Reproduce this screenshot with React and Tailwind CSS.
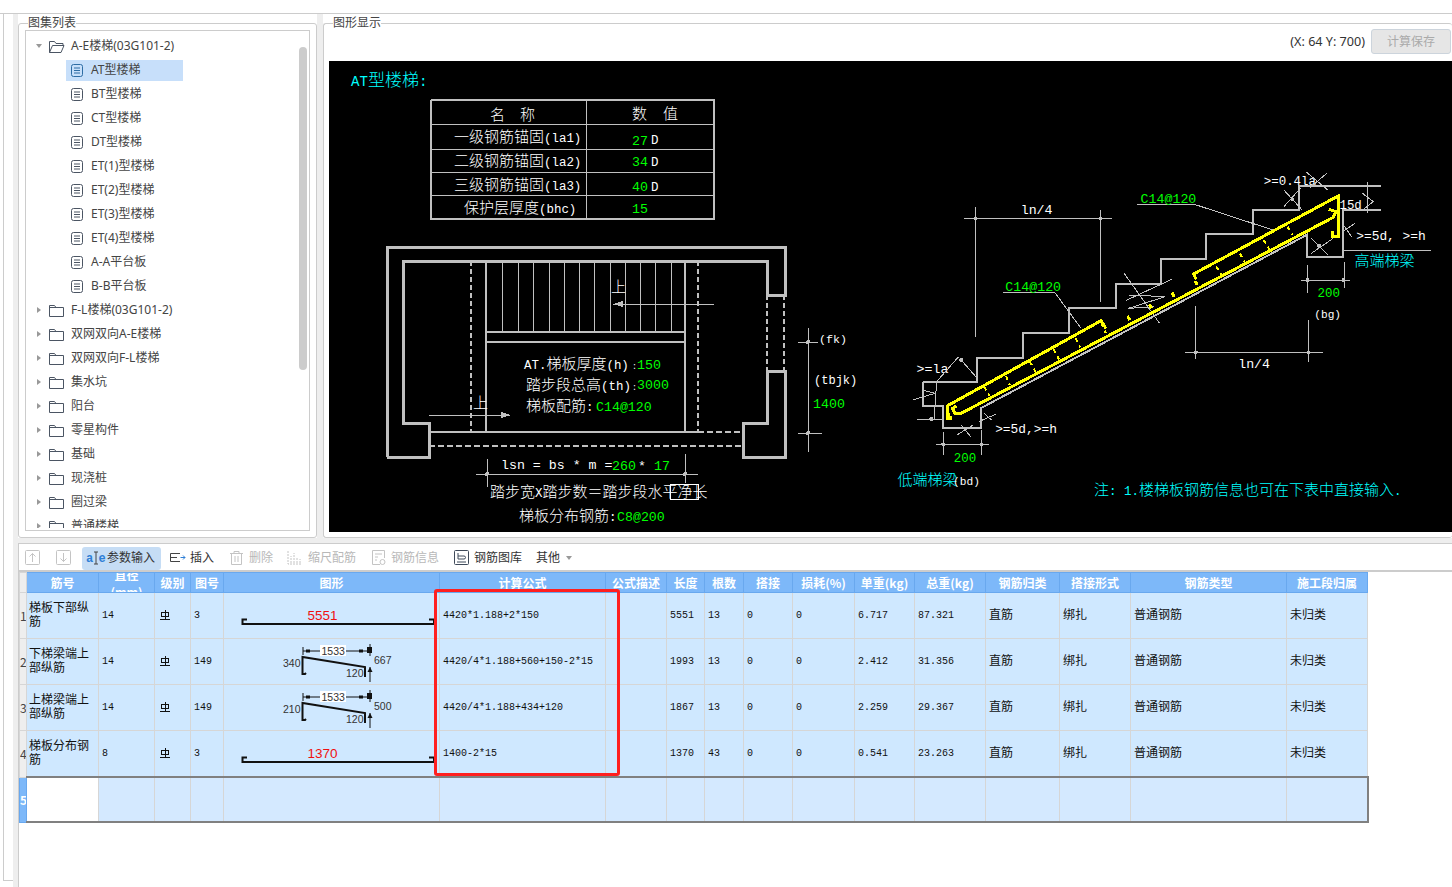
import React from "react";

const CJK = '"Noto Sans CJK SC", sans-serif';
const MONO = '"Liberation Mono", monospace';

/* ---------- CAD text: CJK glyphs are full-width, the rest half-width ---------- */
function T({ x, y, s = 15, c = "#fff", children }) {
  const runs = String(children).match(/[\u0000-\u00ff]+|[^\u0000-\u00ff]+/g) || [];
  return (
    <text x={x} y={y} fill={c} style={{ whiteSpace: "pre" }}>
      {runs.map((r, i) =>
        /^[\u0000-\u00ff]/.test(r) ? (
          <tspan key={i} fontFamily={MONO} fontSize={s * 0.83}>{r}</tspan>
        ) : (
          <tspan key={i} fontFamily={CJK} fontSize={s} fontWeight="300">{r}</tspan>
        )
      )}
    </text>
  );
}

function L({ p, c = "#c0c0c0", w = 1, dash }) {
  return (
    <polyline
      points={p.map((q) => q.join(",")).join(" ")}
      fill="none"
      stroke={c}
      strokeWidth={w}
      strokeDasharray={dash}
    />
  );
}

const G = "#00ff00";
const CY = "#00ffff";
const Y = "#ffff00";
const W = "#c0c0c0";

/* right-hand drawing was measured on a crop: convert crop coordinates to page */
const Z = (pts) => pts.map(([x, y]) => [880 + x / 2.736, 160 + y / 3]);
const ZL = ({ p, ...r }) => <L p={Z(p)} {...r} />;
const zx = (x) => 880 + x / 2.736;
const zy = (y) => 160 + y / 3;

function Dot({ x, y, r = 2 }) {
  return <circle cx={x} cy={y} r={r} fill="#c0c0c0" />;
}

function Cad() {
  const steps = [502, 518, 533, 549, 564, 579, 594, 610, 625, 640, 655, 671];
  const ties = [
    [[285, 680], [300, 708]],
    [[345, 648], [355, 675]],
    [[410, 605], [425, 635]],
    [[475, 568], [490, 598]],
    [[535, 535], [548, 562]],
    [[605, 490], [618, 520]],
    [[920, 320], [935, 345]],
    [[985, 280], [998, 308]],
    [[1050, 240], [1065, 268]],
    [[1115, 200], [1128, 225]],
  ];
  const bumps = [[680, 480], [740, 445], [802, 410], [865, 375]];
  return (
    <svg viewBox="329 61 1123 471" className="block w-full h-full" shapeRendering="crispEdges">
      <T x={351} y={86} s={17} c={CY}>AT型楼梯:</T>

      {/* value table */}
      <L p={[[431, 100], [714, 100], [714, 219], [431, 219], [431, 100]]} w={2} />
      <L p={[[586, 100], [586, 219]]} />
      <L p={[[431, 124], [714, 124]]} />
      <L p={[[431, 149], [714, 149]]} />
      <L p={[[431, 172], [714, 172]]} />
      <L p={[[431, 195], [714, 195]]} />
      <T x={490} y={120}>名</T>
      <T x={520} y={120}>称</T>
      <T x={632} y={119}>数</T>
      <T x={663} y={119}>值</T>
      <T x={454} y={142}>一级钢筋锚固(la1)</T>
      <T x={454} y={166}>二级钢筋锚固(la2)</T>
      <T x={454} y={190}>三级钢筋锚固(la3)</T>
      <T x={464} y={213}>保护层厚度(bhc)</T>
      <T x={632} y={145} s={16} c={G}>27</T>
      <T x={651} y={144}>D</T>
      <T x={632} y={166} s={16} c={G}>34</T>
      <T x={651} y={166}>D</T>
      <T x={632} y={191} s={16} c={G}>40</T>
      <T x={651} y={191}>D</T>
      <T x={632} y={213} s={16} c={G}>15</T>

      {/* plan */}
      <L w={3} p={[[387, 457], [387, 247], [785, 247], [785, 295], [767, 295], [767, 261], [403, 261], [403, 423], [429, 423], [429, 457], [387, 457]]} />
      <L w={3} p={[[767, 371], [785, 371], [785, 457], [743, 457], [743, 423], [767, 423], [767, 371]]} />
      <L w={2} dash="5 3" p={[[767, 295], [767, 371]]} />
      <L w={2} dash="5 3" p={[[784, 295], [784, 371]]} />
      <L w={2} p={[[429, 432], [698, 432]]} />
      <L w={2} dash="6 3" p={[[698, 432], [743, 432]]} />
      <L w={2} dash="6 3" p={[[429, 446], [743, 446]]} />
      <L w={2} dash="5 3" p={[[471, 261], [471, 432]]} />
      <L w={2} p={[[486, 261], [486, 432]]} />
      <L w={2} p={[[685, 261], [685, 432]]} />
      <L w={2} dash="5 3" p={[[698, 261], [698, 432]]} />
      {steps.map((x) => <L key={x} p={[[x, 261], [x, 332]]} />)}
      <L w={2} p={[[486, 332], [685, 332]]} />
      <L w={2} p={[[486, 342], [685, 342]]} />
      <T x={611} y={292}>上</T>
      <L p={[[613, 304], [714, 304]]} />
      <polygon points="613,304 623,301 623,307" fill={W} />
      <T x={473} y={408}>上</T>
      <L p={[[429, 415], [510, 415]]} />
      <polygon points="510,415 501,412 501,418" fill={W} />
      <T x={524} y={369}>AT.梯板厚度(h)</T>
      <T x={632} y={369} s={10}>:</T>
      <T x={637} y={369} s={16} c={G}>150</T>
      <T x={526} y={390}>踏步段总高(th)</T>
      <T x={632} y={390} s={10}>:</T>
      <T x={637} y={389} s={16} c={G}>3000</T>
      <T x={526} y={411}>梯板配筋:</T>
      <T x={596} y={411} s={16} c={G}>C14@120</T>

      {/* plan dimensions */}
      <L p={[[487, 459], [487, 487]]} />
      <L p={[[685, 454], [685, 483]]} />
      <L p={[[476, 474], [698, 474]]} />
      <Dot x={487} y={474} />
      <Dot x={685} y={474} />
      <T x={501} y={469} s={16}>lsn = bs * m =</T>
      <T x={612} y={470} s={16} c={G}>260</T>
      <T x={638} y={470} s={16}>*</T>
      <T x={654} y={470} s={16} c={G}>17</T>
      <T x={490} y={497}>踏步宽X踏步数＝踏步段水平净长</T>
      <rect x={670} y={484} width={28} height={15} fill="none" stroke="#fff" />
      <T x={519} y={521}>梯板分布钢筋:</T>
      <T x={617} y={521} s={16} c={G}>C8@200</T>
      <L p={[[808, 328], [808, 452]]} />
      <L p={[[798, 342], [818, 342]]} />
      <L p={[[798, 433], [822, 433]]} />
      <Dot x={808} y={342} />
      <Dot x={808} y={433} />
      <T x={819} y={343} s={14}>(fk)</T>
      <T x={814} y={384} s={14.5}>(tbjk)</T>
      <T x={813} y={408} s={16} c={G}>1400</T>

      {/* stair section: concrete */}
      <ZL w={2} p={[[117, 665], [265, 665], [265, 595], [392, 595], [392, 518], [516, 518], [516, 443], [645, 443], [645, 372], [770, 372], [770, 297], [893, 297], [893, 222], [1020, 222], [1020, 150], [1146, 150], [1146, 78], [1370, 78]]} />
      <ZL w={2} p={[[117, 665], [117, 737], [173, 737], [173, 805], [275, 805], [275, 745], [1167, 225], [1167, 290], [1268, 290], [1268, 150], [1370, 150]]} />

      {/* section dimensions */}
      <ZL p={[[230, 175], [635, 175]]} />
      <ZL p={[[262, 140], [262, 532]]} />
      <ZL p={[[604, 150], [604, 425]]} />
      <Dot x={zx(262)} y={zy(175)} />
      <Dot x={zx(604)} y={zy(175)} />
      <T x={zx(385)} y={zy(163)} s={16}>ln/4</T>
      <ZL p={[[835, 577], [1212, 577]]} />
      <ZL p={[[864, 437], [864, 597]]} />
      <ZL p={[[1173, 480], [1173, 605]]} />
      <Dot x={zx(864)} y={zy(577)} />
      <Dot x={zx(1173)} y={zy(577)} />
      <T x={zx(980)} y={zy(625)} s={16}>ln/4</T>
      <ZL p={[[702, 133], [860, 133], [1075, 210]]} />
      <T x={zx(713)} y={zy(128)} s={16} c={G}>C14@120</T>
      <ZL p={[[337, 397], [478, 397], [550, 505]]} />
      <T x={zx(343)} y={zy(392)} s={16} c={G}>C14@120</T>
      <T x={zx(1050)} y={zy(75)} s={15}>&gt;=0.4la</T>
      <ZL p={[[1105, 90], [1155, 150]]} />
      <ZL p={[[1105, 140], [1150, 85]]} />
      <Dot x={zx(1128)} y={zy(118)} />
      <ZL p={[[1165, 35], [1225, 90]]} />
      <ZL p={[[1222, 40], [1175, 85]]} />
      <T x={zx(1257)} y={zy(148)} s={15}>15d</T>
      <ZL p={[[1333, 65], [1333, 160]]} />
      <ZL p={[[1320, 100], [1350, 125], [1320, 150]]} />
      <T x={zx(1303)} y={zy(240)} s={15.5}>&gt;=5d, &gt;=h</T>
      <ZL p={[[1265, 190], [1290, 230]]} />
      <ZL p={[[1265, 215], [1300, 190]]} />
      <ZL p={[[1180, 235], [1225, 285]]} />
      <ZL p={[[1180, 280], [1240, 235]]} />
      <Dot x={zx(1202)} y={zy(258)} />
      <ZL p={[[1268, 270], [1508, 270]]} />
      <T x={zx(1298)} y={zy(318)} c={CY}>高端梯梁</T>
      <ZL p={[[1170, 315], [1170, 400]]} />
      <ZL p={[[1270, 305], [1270, 385]]} />
      <ZL p={[[1152, 360], [1285, 360]]} />
      <Dot x={zx(1170)} y={zy(360)} />
      <Dot x={zx(1268)} y={zy(360)} />
      <T x={zx(1197)} y={zy(410)} c={G}>200</T>
      <T x={zx(1188)} y={zy(473)} s={13.5}>(bg)</T>
      <ZL p={[[668, 340], [765, 490]]} />
      <ZL p={[[672, 422], [798, 358]]} />
      <ZL p={[[680, 405], [780, 410], [680, 445], [750, 440]]} />
      <T x={zx(100)} y={zy(640)} s={16}>&gt;=la</T>
      <ZL p={[[215, 590], [155, 665], [148, 780]]} />
      <ZL p={[[222, 600], [262, 650]]} />
      <Dot x={zx(222)} y={zy(600)} />
      <ZL p={[[100, 777], [175, 777]]} />
      <Dot x={zx(140)} y={zy(777)} />
      <ZL p={[[90, 720], [150, 700], [115, 690]]} />
      <T x={zx(315)} y={zy(820)} s={15.5}>&gt;=5d,&gt;=h</T>
      <ZL p={[[285, 760], [305, 780]]} />
      <ZL p={[[270, 785], [318, 762]]} />
      <ZL p={[[210, 825], [255, 795]]} />
      <ZL p={[[222, 795], [248, 830]]} />
      <ZL p={[[152, 853], [298, 853]]} />
      <ZL p={[[173, 815], [173, 885]]} />
      <ZL p={[[278, 810], [278, 885]]} />
      <Dot x={zx(173)} y={zy(853)} />
      <Dot x={zx(278)} y={zy(853)} />
      <T x={zx(202)} y={zy(905)} c={G}>200</T>
      <T x={zx(48)} y={zy(975)} c={CY}>低端梯梁</T>
      <T x={zx(200)} y={zy(975)} s={13.5}>(bd)</T>
      <T x={1094} y={zy(1005)} c={CY}>注: 1.楼梯板钢筋信息也可在下表中直接输入.</T>

      {/* reinforcement */}
      <ZL c={Y} w={3} p={[[185, 775], [185, 737], [605, 482], [618, 505]]} />
      <ZL c={Y} w={3} p={[[865, 358], [858, 342], [1255, 107], [1255, 230], [1238, 230], [1238, 212]]} />
      <ZL c={Y} w={3} p={[[210, 738], [198, 745], [205, 760], [222, 760], [1240, 172], [1248, 155], [1228, 148]]} />
      <ZL c={Y} w={4} p={[[185, 760], [185, 775], [198, 775]]} />
      {ties.map((t, i) => <ZL key={i} c={Y} w={2} dash="4 4" p={t} />)}
      {bumps.map(([x, y], i) => <ZL key={i} c={Y} w={3} p={[[x - 3, y - 12], [x + 3, y]]} />)}
    </svg>
  );
}

/* ---------- tree ---------- */
function Caret({ open }) {
  return (
    <svg width="6" height="6" viewBox="0 0 6 6" className="shrink-0">
      {open ? <path d="M0 1h6L3 5z" fill="#999" /> : <path d="M1 0l4 3-4 3z" fill="#999" />}
    </svg>
  );
}
function Folder({ open }) {
  return (
    <svg width="16" height="13" viewBox="0 0 16 13" fill="none" stroke="#4b5563" className="shrink-0">
      {open ? (
        <path d="M.5 12.5V1.5h5l1.5 2h7v2M.5 12.5h11.5l3-7H3.5z" />
      ) : (
        <path d="M.5 12.5V1.5h5l1.5 2h7.5v9z M.5 3.5H7" />
      )}
    </svg>
  );
}
function Doc({ on }) {
  const c = on ? "#2e6da4" : "#4b5563";
  return (
    <svg width="12" height="13" viewBox="0 0 12 13" fill="none" stroke={c} className="shrink-0">
      <rect x=".5" y=".5" width="11" height="12" rx="2" />
      <path d="M3 4h6M3 6.5h6M3 9h6" />
    </svg>
  );
}

const folders = ["F-L楼梯(03G101-2)", "双网双向A-E楼梯", "双网双向F-L楼梯", "集水坑", "阳台", "零星构件", "基础", "现浇桩", "圈过梁", "普通楼梯"];
const docs = ["AT型楼梯", "BT型楼梯", "CT型楼梯", "DT型楼梯", "ET(1)型楼梯", "ET(2)型楼梯", "ET(3)型楼梯", "ET(4)型楼梯", "A-A平台板", "B-B平台板"];

function FolderRow({ label, open }) {
  return (
    <div className="h-6 flex items-center pl-[10px] shrink-0">
      <span className="w-[13px] flex"><Caret open={open} /></span>
      <Folder open={open} />
      <span className="ml-[6px] whitespace-nowrap">{label}</span>
    </div>
  );
}

function Tree() {
  return (
    <div className="relative flex-1 border border-[#cccccc] bg-white">
      <div className="h-[497px] overflow-hidden pt-[3px] flex flex-col">
        <FolderRow label="A-E楼梯(03G101-2)" open />
        {docs.map((d, i) => (
          <div key={d} className="h-6 shrink-0 flex items-center ml-[40px]">
            <div className={"w-[117px] h-[21px] flex items-center pl-[5px] gap-2 whitespace-nowrap " + (i === 0 ? "bg-[#c7dffa]" : "")}>
              <Doc on={i === 0} />
              <span>{d}</span>
            </div>
          </div>
        ))}
        {folders.map((f) => <FolderRow key={f} label={f} />)}
      </div>
      <div className="absolute left-[273px] top-[16px] w-2 h-[323px] rounded bg-[#cccccc]" />
    </div>
  );
}

function Group({ title, className, children }) {
  return (
    <div className={"relative border border-[#cccccc] rounded-[3px] " + className}>
      <span className="absolute left-[9px] -top-[8px] bg-white text-[12px] leading-[14px] text-[#444]">{title}</span>
      {children}
    </div>
  );
}

/* ---------- toolbar ---------- */
const Ic = ({ children, c = "#c4c4c4", w = 16 }) => (
  <svg width={w} height="16" viewBox="0 0 16 16" fill="none" stroke={c} className="shrink-0">{children}</svg>
);

function Tool({ icon, label, off, on, className = "" }) {
  return (
    <div className={"flex items-center h-[23px] whitespace-nowrap rounded-[3px] " + (off ? "text-[#b8b8b8] " : "text-[#333] ") + (on ? "bg-[#c6ddf5] " : "") + className}>
      {icon}
      <span>{label}</span>
    </div>
  );
}

function Toolbar() {
  return (
    <div className="h-[24px] pt-[2px] box-content shrink-0 flex items-center text-[12px] border-b-2 border-[#cccccc] pl-[6px]">
      <Ic><rect x=".5" y=".5" width="14" height="14" rx="1" /><path d="M7.5 12V3.5M4.5 6.5l3-3 3 3" /></Ic>
      <div className="ml-[15px]"><Ic><rect x=".5" y=".5" width="14" height="14" rx="1" /><path d="M7.5 3v8.5M4.5 8.5l3 3 3-3" /></Ic></div>
      <Tool
        on
        className="ml-[10px] w-[79px] pl-[4px] gap-[1px]"
        icon={
          <svg width="20" height="16" viewBox="0 0 20 16" fill="none" className="shrink-0">
            <text x="0" y="12" fontSize="12" fontWeight="700" fill="#2f7fd6" fontFamily={MONO}>a</text>
            <path d="M8 2h4M10 2v12M8 14h4" stroke="#444" />
            <text x="12.5" y="12" fontSize="12" fontWeight="700" fill="#2f7fd6" fontFamily={MONO}>e</text>
          </svg>
        }
        label="参数输入"
      />
      <Tool
        className="ml-[9px] gap-[4px]"
        icon={
          <Ic c="#444">
            <path d="M10 3.5H.5v8H10M.5 7.5H7" />
            <path d="M10.5 7.5h4.5M13 5.5l2 2-2 2" stroke="#2f7fd6" />
          </Ic>
        }
        label="插入"
      />
      <Tool
        off
        className="ml-[15px] gap-[4px]"
        icon={
          <Ic>
            <path d="M1 3.5h13M5 3.5V1.5h5v2M2.5 3.5v11h10v-11M6 6v6M9 6v6" />
          </Ic>
        }
        label="删除"
      />
      <Tool
        off
        className="ml-[14px] gap-[5px]"
        icon={
          <Ic>
            <path d="M1 1v13h14M4 13V6M7 13V3M10 13V7M13 13V9" strokeDasharray="2 1" />
          </Ic>
        }
        label="缩尺配筋"
      />
      <Tool
        off
        className="ml-[15px] gap-[4px]"
        icon={
          <Ic>
            <path d="M9 14.5H1.5v-14h12V8M4 4h7M4 7h3M4 10h2" />
            <circle cx="11.5" cy="12" r="2.5" />
          </Ic>
        }
        label="钢筋信息"
      />
      <Tool
        className="ml-[15px] gap-[4px]"
        icon={
          <Ic c="#3f4a5a">
            <rect x=".5" y=".5" width="14" height="14" rx="1" />
            <path d="M4 3v6h6a1.5 1.5 0 0 0 0-3H4M3 12h9" />
          </Ic>
        }
        label="钢筋图库"
      />
      <span className="ml-[14px] text-[#333]">其他</span>
      <svg width="6" height="4" viewBox="0 0 6 4" className="ml-[6px]"><path d="M0 0h6L3 4z" fill="#999" /></svg>
    </div>
  );
}

/* ---------- grid ---------- */
const widths = [7, 72, 56, 36, 33, 216, 166, 61, 38, 39, 49, 62, 60, 71, 74, 71, 156, 81];
const heads = ["", "筋号", "直径|(mm)", "级别", "图号", "图形", "计算公式", "公式描述", "长度", "根数", "搭接", "损耗(%)", "单重(kg)", "总重(kg)", "钢筋归类", "搭接形式", "钢筋类型", "施工段归属"];

function Grade() {
  return (
    <svg width="10" height="10" viewBox="0 0 10 10" fill="none" stroke="#111" className="block ml-[2px]" shapeRendering="crispEdges">
      <path d="M1.5 2.5h7v4h-7zM5 0v9M0 9.5h10" />
    </svg>
  );
}

function Straight({ label, base }) {
  return (
    <svg viewBox={`223 ${base} 216 45`} className="block w-[216px] h-[45px]">
      <text x="306.5" y={base + 27} fontSize="13.5" fill="#f01010" fontFamily='"Liberation Sans", sans-serif'>{label}</text>
      <path d={`M246 ${base + 26.5}h-4.5v4.5H433v-4.5h-5`} fill="none" stroke="#111" strokeWidth="2" />
    </svg>
  );
}

function Bent({ a, b, base }) {
  const y = (v) => base + v;
  const num = { fontSize: 10.5, fill: "#333", fontFamily: '"Liberation Sans", sans-serif' };
  return (
    <svg viewBox={`223 ${base} 216 45`} className="block w-[216px] h-[45px]">
      <path d={`M302 ${y(8)}v8M302 ${y(12)}H369M369 ${y(5)}v12`} fill="none" stroke="#111" />
      <rect x="305" y={y(10.5)} width="4" height="3" fill="#111" />
      <rect x="358" y={y(10.5)} width="4" height="3" fill="#111" />
      <rect x="366" y={y(8)} width="5" height="6" fill="#111" />
      <rect x="319" y={y(6)} width="26" height="11" fill="#fff" />
      <text x="320.5" y={y(16)} {...num}>1533</text>
      <path d={`M305 ${y(34)}l-1 1h-2.5V${y(18)}L364 ${y(28)}v10`} fill="none" stroke="#111" strokeWidth="2" />
      <path d={`M369 ${y(28)}v15`} stroke="#111" />
      <path d={`M369 ${y(28)}l-2.5 5h5z`} fill="#111" />
      <text x="282" y={y(28)} {...num}>{a}</text>
      <text x="373" y={y(25)} {...num}>{b}</text>
      <text x="345" y={y(38)} {...num}>120</text>
    </svg>
  );
}

const rows = [
  { no: 1, name: "梯板下部纵筋", d: "14", fig: "3", shape: <Straight label="5551" base={593} />, f: "4420*1.188+2*150", len: "5551", n: "13", w: "6.717", t: "87.321" },
  { no: 2, name: "下梯梁端上部纵筋", d: "14", fig: "149", shape: <Bent a="340" b="667" base={639} />, f: "4420/4*1.188+560+150-2*15", len: "1993", n: "13", w: "2.412", t: "31.356" },
  { no: 3, name: "上梯梁端上部纵筋", d: "14", fig: "149", shape: <Bent a="210" b="500" base={685} />, f: "4420/4*1.188+434+120", len: "1867", n: "13", w: "2.259", t: "29.367" },
  { no: 4, name: "梯板分布钢筋", d: "8", fig: "3", shape: <Straight label="1370" base={731} />, f: "1400-2*15", len: "1370", n: "43", w: "0.541", t: "23.263" },
];

const tdCn = "border border-[#d6d6d6] px-[3px] pb-[3px] text-[12px] text-[#111]";
const tdNum = "border border-[#d6d6d6] pl-[3px] pb-[1px] font-['Liberation_Mono',monospace] text-[10px] text-[#111]";

function Grid() {
  return (
    <div className="relative w-[1348px]">
      <table className="table-fixed border-collapse w-[1348px] font-['Noto_Sans_CJK_SC',sans-serif]">
        <colgroup>
          {widths.map((w, i) => <col key={i} style={{ width: w }} />)}
        </colgroup>
        <thead>
          <tr className="h-[20px]">
            {heads.map((h, i) =>
              i === 0 ? (
                <th key={i} className="bg-[#eeeeee] border border-[#d6d6d6]" />
              ) : (
                <th key={i} className="bg-[#7db8f9] border border-[#69a8ee] p-0 text-[12px] font-bold text-white">
                  <div className="h-[19px] overflow-hidden flex items-center justify-center leading-[17px] whitespace-nowrap text-center">
                    <div>{h.split("|").map((x, j) => <div key={j}>{x}</div>)}</div>
                  </div>
                </th>
              )
            )}
          </tr>
        </thead>
        <tbody>
          {rows.map((r) => (
            <tr key={r.no} className="h-[46px] bg-[#cfe8ff]">
              <td className="bg-[#eeeeee] border border-[#d6d6d6] p-0 text-[12px] text-[#444] text-center overflow-hidden">{r.no}</td>
              <td className={tdCn + " pl-[2px] leading-[14px]"}>{r.name}</td>
              <td className={tdNum}>{r.d}</td>
              <td className={tdNum}><Grade /></td>
              <td className={tdNum}>{r.fig}</td>
              <td className="border border-[#d6d6d6] p-0">{r.shape}</td>
              <td className={tdNum + " whitespace-nowrap"}>{r.f}</td>
              <td className={tdNum} />
              <td className={tdNum}>{r.len}</td>
              <td className={tdNum}>{r.n}</td>
              <td className={tdNum}>0</td>
              <td className={tdNum}>0</td>
              <td className={tdNum}>{r.w}</td>
              <td className={tdNum}>{r.t}</td>
              <td className={tdCn}>直筋</td>
              <td className={tdCn}>绑扎</td>
              <td className={tdCn}>普通钢筋</td>
              <td className={tdCn}>未归类</td>
            </tr>
          ))}
          <tr className="h-[45px] bg-[#d4e9ff]">
            <td className="bg-[#7db8f9] border border-[#69a8ee] p-0 text-[12px] font-bold text-white text-center overflow-hidden">5</td>
            <td className="bg-white border-y-2 border-y-[#808080]" />
            {widths.slice(2).map((_, i) => (
              <td key={i} className={"border-x border-x-[#d6d6d6] border-y-2 border-y-[#808080] " + (i === 15 ? "border-r-2 border-r-[#808080]" : "")} />
            ))}
          </tr>
        </tbody>
      </table>
      <div className="absolute left-[415px] top-[17px] w-[186px] h-[187px] border-[3px] border-[#ff1f1f] rounded-[3px]" />
    </div>
  );
}

export default function App() {
  return (
    <div className="w-[1452px] h-[887px] overflow-hidden flex flex-col bg-white text-[#444] text-[12px] font-['Noto_Sans','Noto_Sans_CJK_SC',sans-serif]">
      <div className="h-[14px] shrink-0 border-b border-[#cccccc] bg-white" />
      <div className="flex-1 min-h-0 flex">
        {/* left edge */}
        <div className="w-[18px] shrink-0 flex">
          <div className="w-[10px] h-[867px] border-l border-b border-[#cccccc] ml-[3px] bg-white" />
          <div className="w-[5px] bg-[#eeeeee]" />
        </div>

        <div className="flex-1 min-w-0 flex flex-col bg-[#eeeeee]">
          {/* upper panels */}
          <div className="h-[524px] shrink-0 flex">
            <div className="w-[299px] shrink-0 bg-white pt-[9px]">
              <Group title="图集列表" className="h-[515px] p-[6px] flex">
                <Tree />
              </Group>
            </div>
            <div className="w-[6px] shrink-0" />
            <div className="flex-1 min-w-0 bg-white pt-[9px]">
              <Group title="图形显示" className="h-[515px] border-r-0 pl-[5px] flex flex-col">
                <div className="h-[37px] shrink-0 flex items-start justify-end pt-[5px] pr-[1px] gap-[6px]">
                  <span className="leading-[25px] text-[12.6px] text-[#333] whitespace-nowrap">(X: 64 Y: 700)</span>
                  <div className="w-[80px] h-[25px] flex items-center justify-center rounded-[3px] border border-[#ccd4dc] bg-[#e6e6e6] text-[#aaaaaa]">计算保存</div>
                </div>
                <div className="h-[471px] bg-black shrink-0">
                  <Cad />
                </div>
              </Group>
            </div>
          </div>

          {/* lower panel */}
          <div className="mt-[5px] flex-1 min-h-0 bg-white border-t border-l border-[#cccccc] flex flex-col">
            <Toolbar />
            <Grid />
          </div>
        </div>
      </div>
    </div>
  );
}
